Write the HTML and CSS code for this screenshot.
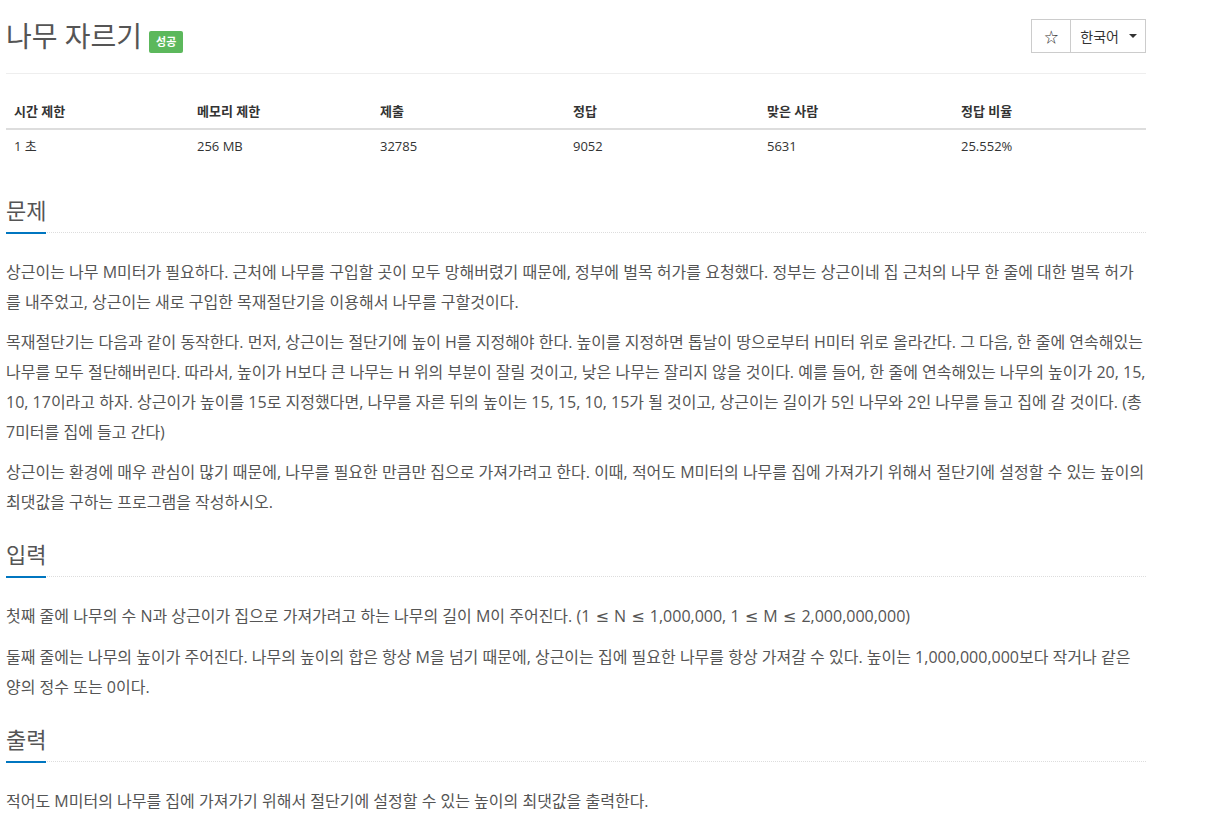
FILE: index.html
```html
<!DOCTYPE html>
<html lang="ko">

<head>
    <meta charset="UTF-8">
    <meta name="viewport" content="width=device-width, initial-scale=1.0">
    <title>나무 자르기</title>
    <link rel="stylesheet" href="styles.css">
</head>

<body>
    <div class="container">
        <div class="page-header">
            <h1 class="problem-title">나무 자르기<span class="label-success">성공</span></h1>
            <div class="btn-group">
                <button class="btn btn-star">☆</button>
                <button class="btn btn-lang">한국어<span class="caret"></span></button>
            </div>
        </div>

        <table class="problem-info">
            <thead>
                <tr>
                    <th>시간 제한</th>
                    <th>메모리 제한</th>
                    <th>제출</th>
                    <th>정답</th>
                    <th>맞은 사람</th>
                    <th>정답 비율</th>
                </tr>
            </thead>
            <tbody>
                <tr>
                    <td>1 초</td>
                    <td>256 MB</td>
                    <td>32785</td>
                    <td>9052</td>
                    <td>5631</td>
                    <td>25.552%</td>
                </tr>
            </tbody>
        </table>

        <section class="problem-section">
            <div class="headline">
                <h2>문제</h2>
            </div>
            <div class="problem-text">
                <p>상근이는 나무 M미터가 필요하다. 근처에 나무를 구입할 곳이 모두 망해버렸기 때문에, 정부에 벌목 허가를 요청했다. 정부는 상근이네 집 근처의 나무 한 줄에 대한 벌목 허가를 내주었고, 상근이는 새로 구입한 목재절단기을 이용해서 나무를 구할것이다.</p>
                <p>목재절단기는 다음과 같이 동작한다. 먼저, 상근이는 절단기에 높이 H를 지정해야 한다. 높이를 지정하면 톱날이 땅으로부터 H미터 위로 올라간다. 그 다음, 한 줄에 연속해있는 나무를 모두 절단해버린다. 따라서, 높이가 H보다 큰 나무는 H 위의 부분이 잘릴 것이고, 낮은 나무는 잘리지 않을 것이다. 예를 들어, 한 줄에 연속해있는 나무의 높이가 20, 15, 10, 17이라고 하자. 상근이가 높이를 15로 지정했다면, 나무를 자른 뒤의 높이는 15, 15, 10, 15가 될 것이고, 상근이는 길이가 5인 나무와 2인 나무를 들고 집에 갈 것이다. (총 7미터를 집에 들고 간다)</p>
                <p>상근이는 환경에 매우 관심이 많기 때문에, 나무를 필요한 만큼만 집으로 가져가려고 한다. 이때, 적어도 M미터의 나무를 집에 가져가기 위해서 절단기에 설정할 수 있는 높이의 최댓값을 구하는 프로그램을 작성하시오.</p>
            </div>
        </section>

        <section class="problem-section">
            <div class="headline">
                <h2>입력</h2>
            </div>
            <div class="problem-text">
                <p>첫째 줄에 나무의 수 N과 상근이가 집으로 가져가려고 하는 나무의 길이 M이 주어진다. (1 <span class="le">≤</span> N <span class="le">≤</span> 1,000,000, 1 <span class="le">≤</span> M <span class="le">≤</span> 2,000,000,000)</p>
                <p>둘째 줄에는 나무의 높이가 주어진다. 나무의 높이의 합은 항상 M을 넘기 때문에, 상근이는 집에 필요한 나무를 항상 가져갈 수 있다. 높이는 1,000,000,000보다 작거나 같은 양의 정수 또는 0이다.</p>
            </div>
        </section>

        <section class="problem-section">
            <div class="headline">
                <h2>출력</h2>
            </div>
            <div class="problem-text">
                <p>적어도 M미터의 나무를 집에 가져가기 위해서 절단기에 설정할 수 있는 높이의 최댓값을 출력한다.</p>
            </div>
        </section>
    </div>
</body>

</html>
```

FILE: styles.css
```css
body {
    font-family: "Open Sans", "Noto Sans CJK KR", sans-serif;
    background-color: #fff;
    color: #333;
    margin: 0;
    padding: 0;
}

.container {
    width: 1140px;
    padding-left: 6px;
}

/* 제목 + 버튼 */
.page-header {
    display: flex;
    justify-content: space-between;
    align-items: center;
    padding: 19px 0 20px;
    border-bottom: 1px solid #eee;
    margin-bottom: 20px;
}

.problem-title {
    display: flex;
    align-items: flex-end;
    margin: 0;
    font-size: 28px;
    font-weight: normal;
    line-height: 34px;
    color: #555;
}

.label-success {
    margin-left: 7px;
    padding: 0 7px;
    background-color: #5cb85c;
    color: #fff;
    font-size: 11px;
    font-weight: bold;
    line-height: 22px;
    border-radius: 2px;
}

.btn-group {
    display: flex;
}

.btn {
    height: 34px;
    background-color: #fff;
    border: 1px solid #ccc;
    color: #333;
    font-family: "Open Sans", "Noto Sans CJK KR", sans-serif;
    font-size: 14px;
    white-space: nowrap;
    cursor: pointer;
}

.btn-star {
    width: 40px;
    padding: 0;
}

.btn-lang {
    margin-left: -1px;
    padding: 0 8px 0 9px;
    display: flex;
    align-items: center;
}

.caret {
    display: inline-block;
    width: 0;
    height: 0;
    margin-left: 10px;
    border-top: 4px solid #333;
    border-left: 4px solid transparent;
    border-right: 4px solid transparent;
}

/* 문제 정보 표 */
.problem-info {
    width: 1140px;
    border-collapse: collapse;
    table-layout: fixed;
    margin-bottom: 20px;
    font-size: 13px;
    color: #333;
}

.problem-info th:nth-child(1),
.problem-info th:nth-child(2) {
    width: 167px;
}

.problem-info th:nth-child(3),
.problem-info th:nth-child(6) {
    width: 177px;
}

.problem-info th:nth-child(4),
.problem-info th:nth-child(5) {
    width: 178px;
}

.problem-info th {
    text-align: left;
    font-weight: bold;
    padding: 8px;
    line-height: 18px;
    border-bottom: 2px solid #ddd;
}

.problem-info td {
    padding: 7px 8px 8px;
    line-height: 18px;
}

/* 섹션 */
.problem-section {
    padding-top: 10px;
}

.headline {
    margin-bottom: 24px;
    border-bottom: 1px dotted #ddd;
}

.headline h2 {
    display: inline-block;
    margin: 0 0 -2px;
    padding-bottom: 5px;
    border-bottom: 2px solid #0076c0;
    font-size: 22px;
    font-weight: normal;
    line-height: 34px;
    color: #555;
}

.problem-text p {
    margin: 0 0 10px;
    font-size: 16px;
    line-height: 30px;
    color: #555;
}

/* 부등호 */
.le {
    font-family: "DejaVu Sans", sans-serif;
    margin: 0 1px;
}
```
